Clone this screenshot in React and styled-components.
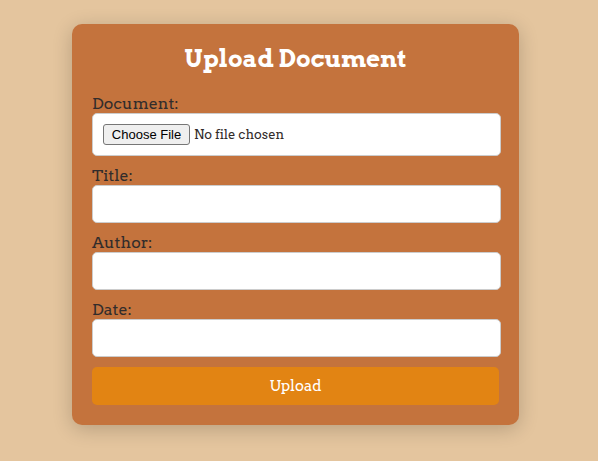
import React from "react";
import styled, { createGlobalStyle } from "styled-components";

const GlobalStyle = createGlobalStyle`
  * { box-sizing: border-box; }
  body {
    margin: 0;
    background: #e4c59e;
    color: #322c2b;
    font-family: Arvo, "DejaVu Serif", serif;
  }
`;

const Page = styled.main`
  padding: 24px 79px 36px 72px;
`;

const Card = styled.form`
  padding: 20px;
  border-radius: 10px;
  background: #c4733d;
  box-shadow: 0 4px 20px rgba(0, 0, 0, 0.2);
`;

const Heading = styled.h1`
  margin: 0 0 20px;
  color: #fff;
  font-size: 24px;
  line-height: 30px;
  text-align: center;
`;

const Field = styled.div`
  margin-bottom: 10px;
`;

const Label = styled.label`
  display: block;
  font-size: 16px;
  line-height: 19px;
`;

const Input = styled.input`
  display: block;
  width: calc(100% + 2px);
  height: ${({ type }) => (type === "file" ? 43 : 38)}px;
  padding: 10px;
  border: 1px solid #ccc;
  border-radius: 5px;
  background: #fff;
  color: #322c2b;
  font-family: inherit;
  font-size: 13px;

  &::file-selector-button {
    width: 87px;
    height: 21px;
    padding: 0;
    border: 1px solid #767676;
    border-radius: 3px;
    background: #efefef;
    color: #000;
    font-family: "Liberation Sans", Arial, sans-serif;
    font-size: 13px;
  }
`;

const SubmitButton = styled.button`
  display: block;
  width: 100%;
  height: 38px;
  border: 0;
  border-radius: 5px;
  background: #e28413;
  color: #fff;
  font-family: inherit;
  font-size: 15px;
  cursor: pointer;
`;

const fields = [
  { id: "document", label: "Document:", type: "file" },
  { id: "title", label: "Title:", type: "text" },
  { id: "author", label: "Author:", type: "text" },
  { id: "date", label: "Date:", type: "text" },
];

export default function App() {
  return (
    <>
      <GlobalStyle />
      <Page>
        <Card onSubmit={(event) => event.preventDefault()}>
          <Heading>Upload Document</Heading>
          {fields.map(({ id, label, type }) => (
            <Field key={id}>
              <Label htmlFor={id}>{label}</Label>
              <Input id={id} name={id} type={type} />
            </Field>
          ))}
          <SubmitButton type="submit">Upload</SubmitButton>
        </Card>
      </Page>
    </>
  );
}
